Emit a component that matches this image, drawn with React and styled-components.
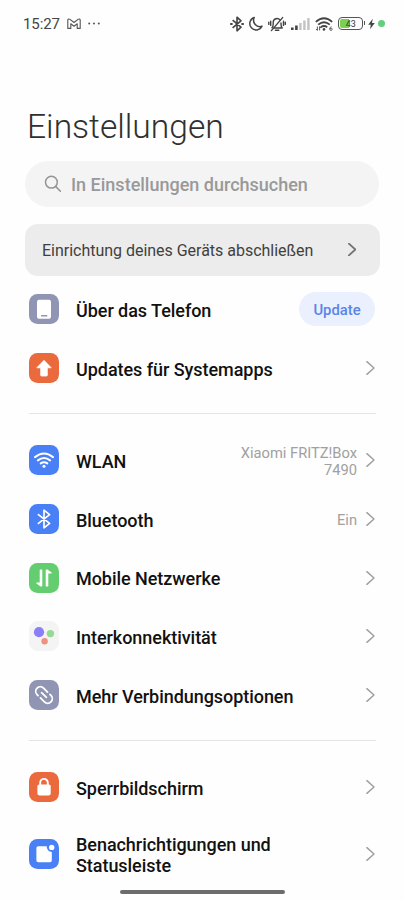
import React from 'react';
import styled, {createGlobalStyle} from 'styled-components';

const BluetoothGlyph = () => (
    <svg width="30" height="30" viewBox="0 0 30 30" fill="none" stroke="#fff" strokeWidth="1.7" strokeLinejoin="round" strokeLinecap="round">
        <path d="M9.4 10.6 20.6 19.4 15 23.8V6.2L20.6 10.6 9.4 19.4" />
    </svg>
);

const PhoneGlyph = () => (
    <svg width="30" height="30" viewBox="0 0 30 30">
        <rect x="8" y="5.7" width="14" height="19" rx="2" fill="#fff" />
        <rect x="12" y="21" width="6.4" height="1.6" rx="0.6" fill="#8f95b2" />
    </svg>
);

const ArrowGlyph = () => (
    <svg width="30" height="30" viewBox="0 0 30 30">
        <path d="M15 7.3 22.2 14.8H18.3V22.2Q18.3 23 17.5 23H12.5Q11.7 23 11.7 22.2V14.8H7.8Z" fill="#fff" stroke="#fff" strokeWidth="0.8" strokeLinejoin="round" />
    </svg>
);

const WifiGlyph = () => (
    <svg width="30" height="30" viewBox="0 0 30 30" fill="none" stroke="#fff" strokeWidth="2" strokeLinecap="round">
        <path d="M6 12.1Q15 4.9 24 12.1" />
        <path d="M8.9 15.4Q15 10.7 21.1 15.4" />
        <path d="M11.7 18.4Q15 16 18.3 18.4" />
        <circle cx="15" cy="21.2" r="1.5" fill="#fff" stroke="none" />
    </svg>
);

const NetworkGlyph = () => (
    <svg width="30" height="30" viewBox="0 0 30 30" fill="#fff" stroke="#fff" strokeWidth="1.2" strokeLinejoin="round">
        <path d="M11.3 7H12.7V22.8H11.6L7.8 20H11.3Z" />
        <path d="M18.7 23H17.3V7.2H18.4L22.2 10H18.7Z" />
    </svg>
);

const DotsGlyph = () => (
    <svg width="30" height="30" viewBox="0 0 30 30">
        <circle cx="10" cy="11.2" r="5.1" fill="#8b7ff5" />
        <circle cx="21.4" cy="12.6" r="3.7" fill="#94db91" />
        <circle cx="15.6" cy="20.2" r="3.2" fill="#f0907e" />
    </svg>
);

const LinkGlyph = () => (
    <svg width="30" height="30" viewBox="0 0 30 30" fill="none" stroke="#fff" strokeWidth="1.8" strokeLinecap="round">
        <g transform="rotate(45 15 15)">
            <path d="M11.2 19.6H9.8A4.6 4.6 0 0 1 9.8 10.4H15.4" />
            <path d="M18.8 10.4H20.2A4.6 4.6 0 0 1 20.2 19.6H14.6" />
            <path d="M11.6 15H18.4" />
        </g>
    </svg>
);

const LockGlyph = () => (
    <svg width="30" height="30" viewBox="0 0 30 30">
        <path d="M11.2 14V10.7A3.8 3.8 0 0 1 18.8 10.7V14" fill="none" stroke="#fff" strokeWidth="1.9" />
        <rect x="8.4" y="12.4" width="13.3" height="11" rx="1.8" fill="#fff" />
    </svg>
);

const NoticeGlyph = () => (
    <svg width="30" height="30" viewBox="0 0 30 30">
        <path d="M9.2 7.3H17.8A5 5 0 0 0 22.8 13V21.4Q22.8 23.2 21 23.2H9.2Q7.4 23.2 7.4 21.4V9.1Q7.4 7.3 9.2 7.3Z" fill="#fff" />
        <circle cx="22.7" cy="8.4" r="2.7" fill="#fff" />
    </svg>
);

const Chevron = ({color = '#a0a0a0', size = 14, stroke = 1.5}) => (
    <svg width={size * 0.64} height={size} viewBox="0 0 9 14" fill="none" stroke={color} strokeWidth={stroke} strokeLinecap="round" strokeLinejoin="round">
        <path d="M0.9 0.6 8 7 0.9 13.4" />
    </svg>
);

const groups = [
    [
        {title: 'Über das Telefon', color: '#8f95b2', icon: <PhoneGlyph />, action: 'Update'},
        {title: 'Updates für Systemapps', color: '#ea6a3d', icon: <ArrowGlyph />},
    ],
    [
        {title: 'WLAN', color: '#4a80f5', icon: <WifiGlyph />, value: 'Xiaomi FRITZ!Box 7490'},
        {title: 'Bluetooth', color: '#4a80f5', icon: <BluetoothGlyph />, value: 'Ein'},
        {title: 'Mobile Netzwerke', color: '#64cd70', icon: <NetworkGlyph />},
        {title: 'Interkonnektivität', color: '#f4f4f4', icon: <DotsGlyph />},
        {title: 'Mehr Verbindungsoptionen', color: '#8f95b2', icon: <LinkGlyph />},
    ],
    [
        {title: 'Sperrbildschirm', color: '#ea6a3d', icon: <LockGlyph />},
        {title: 'Benachrichtigungen und Statusleiste', color: '#4a80f5', icon: <NoticeGlyph />, tall: true},
    ],
];

const Status = () => (
    <StatusBar>
        <StatusSide>
            <Clock>15:27</Clock>
            <svg width="14" height="12" viewBox="0 0 14 12" fill="none" stroke="#555" strokeWidth="1.1" strokeLinejoin="round">
                <path d="M0.8 1.8Q1.6 0.4 3 1.4L7 4.5 11 1.4Q12.4 0.4 13.2 1.8V10.4H10.2V5.8L7 8.2 3.8 5.8V10.4H0.8Z" />
            </svg>
            <svg width="12" height="3" viewBox="0 0 12 3" fill="#555">
                <circle cx="1.2" cy="1.5" r="1" />
                <circle cx="6" cy="1.5" r="1" />
                <circle cx="10.8" cy="1.5" r="1" />
            </svg>
        </StatusSide>
        <StatusIcons>
            <svg width="14" height="16" viewBox="0 0 14 16" fill="none" stroke="#444" strokeWidth="1.6" strokeLinejoin="round">
                <path d="M2.6 4.2 11 11.2 7 14.8V1.2L11 4.8 2.6 11.8" />
                <path d="M0.2 8H2.6M11.4 8H13.8" strokeWidth="2" />
            </svg>
            <svg width="14" height="16" viewBox="0 0 14 16" fill="none" stroke="#444" strokeWidth="1.5" strokeLinejoin="round">
                <path d="M5.2 1.5A6.4 6.4 0 1 0 13 10.3 6.4 6.4 0 0 1 5.2 1.5Z" />
            </svg>
            <svg width="18" height="16" viewBox="0 0 18 16" fill="none" stroke="#444" strokeWidth="1.4" strokeLinecap="round" strokeLinejoin="round">
                <path d="M4 11.8Q5.2 10.6 5.2 8V6.2A3.8 3.8 0 0 1 12 4M13 7V8Q13 10.6 14.2 12H6" />
                <path d="M7.4 14.2H10.8M3.4 14.6 14.6 1.6" />
                <path d="M2.7 5.3V9.4M0.8 6.3V8.4M15.5 5.3V9.4M17.3 6.3V8.4" />
            </svg>
            <svg width="19" height="16" viewBox="0 0 19 16">
                <path d="M0 11.5H2.6V14H0ZM4.1 9.5H6.7V14H4.1Z" fill="#444" />
                <path d="M8.2 7H10.6V14H8.2ZM12.2 4.5H14.6V14H12.2ZM16.2 2H18.6V14H16.2Z" fill="#c2c2c2" />
            </svg>
            <svg width="18" height="16" viewBox="0 0 18 16" fill="none" stroke="#444" strokeWidth="1.8">
                <path d="M0.8 5.9Q9 -1.3 17.2 5.9M3.2 8.6Q9 3.8 14.8 8.6M5.8 11.2Q9 8.8 12.2 11.2" />
                <circle cx="9" cy="13.4" r="1.3" fill="#444" stroke="none" />
                <path d="M2.4 10.6V14.4M1 13 2.4 14.4M4.6 14.4V10.6L6 12" strokeWidth="0.9" />
                <circle cx="16" cy="13.2" r="1.2" strokeWidth="0.8" />
                <path d="M16.3 10.4Q14.8 11.4 14.8 13.2" strokeWidth="0.8" />
            </svg>
            <Battery><span>43</span></Battery>
            <svg width="7" height="12" viewBox="0 0 7 12" fill="#444">
                <path d="M4.7 0.8 0.2 6.8H2.8L2 11.2 6.8 5H4Z" />
            </svg>
            <Dot />
        </StatusIcons>
    </StatusBar>
);

const Item = ({item}) => (
    <Row $tall={item.tall}>
        <Tile $color={item.color}>{item.icon}</Tile>
        <Title>{item.title}</Title>
        {item.value && <Value>{item.value}</Value>}
        {item.action ? <Action>{item.action}</Action> : <Chevron />}
    </Row>
);

const App = () => (
    <Screen>
        <GlobalStyle />
        <Status />
        <Heading>Einstellungen</Heading>
        <Search>
            <svg width="18" height="18" viewBox="0 0 18 18" fill="none" stroke="#949494" strokeWidth="1.5" strokeLinecap="round">
                <circle cx="7.4" cy="7.2" r="5.9" />
                <path d="M11.8 11.6 16.4 16.2" />
            </svg>
            <span>In Einstellungen durchsuchen</span>
        </Search>
        <Banner>
            <span>Einrichtung deines Geräts abschließen</span>
            <Chevron color="#737373" size={13} stroke={1.9} />
        </Banner>
        {groups.map((group, i) => (
            <Group key={i}>
                {group.map(item => <Item key={item.title} item={item} />)}
            </Group>
        ))}
        <HomeBar />
    </Screen>
);

export default App;

const GlobalStyle = createGlobalStyle`
* {
    box-sizing: border-box;
}
body {
    margin: 0;
    background: #fefefe;
    font-family: Roboto, "Noto Sans", sans-serif;
}
svg {
    display: block;
    flex: none;
}
`;

const Screen = styled.div`
    position: relative;
    width: 405px;
    height: 900px;
    overflow: hidden;
    background: #fefefe;
`;

const StatusBar = styled.div`
    display: flex;
    justify-content: space-between;
    align-items: center;
    height: 47px;
    padding: 0 20px 0 23px;
`;

const StatusSide = styled.div`
    display: flex;
    align-items: center;
    gap: 7px;
`;

const Clock = styled.span`
    font-size: 15px;
    line-height: 18px;
    letter-spacing: -0.1px;
    color: #444;
    margin-top: 1px;
`;

const StatusIcons = styled.div`
    display: flex;
    align-items: center;
    gap: 5.1px;
`;

const Battery = styled.div`
    position: relative;
    display: flex;
    align-items: center;
    justify-content: center;
    width: 25px;
    height: 12.5px;
    border: 1.4px solid #555;
    border-radius: 4px;
    background: linear-gradient(90deg, #7bd04f 43%, #fefefe 43%);
    background-clip: content-box;
    padding: 1px;
    font-size: 9px;
    line-height: 8px;
    color: #333;
    &::after{
        content: '';
        position: absolute;
        right: -3px;
        top: 3px;
        width: 1.4px;
        height: 4px;
        background: #555;
    }
`;

const Dot = styled.div`
    width: 7px;
    height: 7px;
    margin-left: -2.5px;
    border-radius: 50%;
    background: #62cf7c;
`;

const Heading = styled.h1`
    margin: 58px 0 0 27px;
    font-size: 33.6px;
    font-weight: 300;
    line-height: 43px;
    color: #303030;
`;

const Search = styled.div`
    display: flex;
    align-items: center;
    gap: 9px;
    height: 46px;
    margin: 13px 26px 0 25px;
    padding-left: 19px;
    border-radius: 23px;
    background: #f4f4f4;
    font-size: 18px;
    font-weight: 500;
    color: #999;
`;

const Banner = styled.div`
    display: flex;
    align-items: center;
    justify-content: space-between;
    height: 52px;
    margin: 16.5px 25px 4.5px;
    padding: 0 24px 0 17px;
    border-radius: 13px;
    background: #ececec;
    font-size: 16px;
    letter-spacing: -0.02px;
    color: #404040;
    span{
        padding-top: 2px;
    }
`;

const Group = styled.div`
    margin: 0 29px;
    & + &{
        margin-top: 16px;
        padding-top: 16.6px;
        border-top: 1px solid #e4e4e4;
    }
`;

const Row = styled.div`
    display: flex;
    align-items: center;
    height: ${props => props.$tall ? '75px' : '58.7px'};
    padding-right: 1px;
`;

const Tile = styled.div`
    flex: none;
    width: 30px;
    height: 30px;
    margin-right: 17px;
    border-radius: 8.5px;
    background: ${props => props.$color};
`;

const Title = styled.div`
    flex: 1;
    padding-top: 2px;
    font-size: 18px;
    font-weight: 500;
    line-height: 21px;
    letter-spacing: -0.05px;
    color: #111;
`;

const Value = styled.div`
    width: 125px;
    margin-right: 9px;
    padding-top: 2.5px;
    font-size: 14.7px;
    line-height: 17px;
    text-align: right;
    color: #a0a0a0;
`;

const Action = styled.div`
    width: 76px;
    height: 34px;
    border-radius: 17px;
    background: #eaf0fd;
    font-size: 14.8px;
    font-weight: 500;
    line-height: 36px;
    text-align: center;
    color: #5b84e8;
`;

const HomeBar = styled.div`
    position: absolute;
    left: 120px;
    bottom: 6.5px;
    width: 165px;
    height: 4px;
    border-radius: 2px;
    background: #6c6c6c;
`;
